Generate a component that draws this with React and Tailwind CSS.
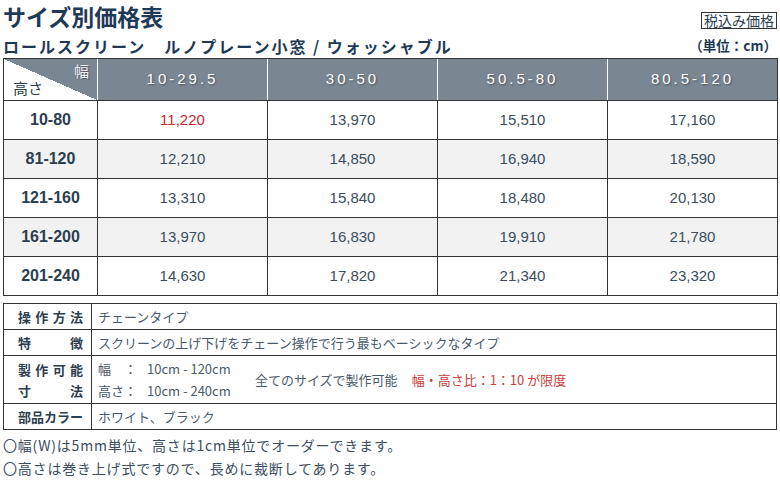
import React from 'react';

const jp = "font-['Noto_Sans_CJK_JP',sans-serif]";
const num = "font-['Liberation_Sans','Noto_Sans_CJK_JP',sans-serif]";

const widths = ['10-29.5', '30-50', '50.5-80', '80.5-120'];

const rows = [
  { h: '10-80', p: ['11,220', '13,970', '15,510', '17,160'] },
  { h: '81-120', p: ['12,210', '14,850', '16,940', '18,590'] },
  { h: '121-160', p: ['13,310', '15,840', '18,480', '20,130'] },
  { h: '161-200', p: ['13,970', '16,830', '19,910', '21,780'] },
  { h: '201-240', p: ['14,630', '17,820', '21,340', '23,320'] },
];

const Label = ({ text }) => (
  <div className="w-[65px] flex justify-between font-bold text-[13px] text-[#2c3e50]">
    {text.split('').map((c, i) => (
      <span key={i}>{c}</span>
    ))}
  </div>
);

const App = () => {
  return (
    <div className={`w-[780px] h-[480px] bg-white overflow-hidden ${jp}`}>
      <div className="pl-[3px] pr-[3px]">
        <div className="flex justify-between items-end h-[33px]">
          <h1 className="text-[23px] leading-[33px] font-bold text-[#1f3a56]">サイズ別価格表</h1>
          <div className="mb-[4px] border border-[#333] px-[2px] text-[14px] leading-[15px] text-[#2c3e50]">税込み価格</div>
        </div>
        <div className="flex justify-between items-center h-[25px]">
          <div className="text-[16px] font-bold tracking-[2px] text-[#1f3a56]">ロールスクリーン　ルノプレーン小窓 / ウォッシャブル</div>
          <div className="text-[13.5px] font-bold text-[#1f3a56]">（単位：cm）</div>
        </div>
      </div>

      <div className="ml-[3px] w-[775px] border border-[#333]">
        <div className="grid grid-cols-[93px_repeat(4,1fr)] h-[41px] bg-[#7a8793]">
          <div className="relative bg-[linear-gradient(to_top_right,#ffffff_50%,#7a8793_50%)]">
            <span className="absolute right-[8px] top-[1px] text-[15px] text-[#eef2f5] [text-shadow:1px_1px_1px_rgba(0,0,0,0.35)]">幅</span>
            <span className="absolute left-[9px] bottom-[1px] text-[15px] text-[#2c3e50]">高さ</span>
          </div>
          {widths.map((w) => (
            <div key={w} className={`border-l border-white flex items-center justify-center text-[15px] tracking-[3px] text-white [text-shadow:1px_1px_2px_rgba(0,0,0,0.4)] ${num}`}>
              {w}
            </div>
          ))}
        </div>
        {rows.map((r, i) => (
          <div key={r.h} className={`grid grid-cols-[93px_repeat(4,1fr)] h-[39px] border-t border-[#333] ${i % 2 === 1 ? 'bg-[#f2f2f2]' : 'bg-white'}`}>
            <div className={`flex items-center justify-center text-[16px] font-bold text-[#2c3e50] ${num}`}>{r.h}</div>
            {r.p.map((p, j) => (
              <div key={j} className={`border-l border-[#333] flex items-center justify-center text-[15px] ${num} ${i === 0 && j === 0 ? 'text-[#d12a2a]' : 'text-[#3b4d5e]'}`}>
                {p}
              </div>
            ))}
          </div>
        ))}
      </div>

      <div className="ml-[3px] mt-[7px] w-[774px] border border-[#333] text-[13px] text-[#4a5a6a]">
        <div className="grid grid-cols-[87px_1fr] h-[25px]">
          <div className="flex items-center pl-[14px]"><Label text="操作方法" /></div>
          <div className="border-l border-[#333] flex items-center pl-[6px]">チェーンタイプ</div>
        </div>
        <div className="grid grid-cols-[87px_1fr] h-[26px] border-t border-[#333]">
          <div className="flex items-center pl-[14px]"><Label text="特徴" /></div>
          <div className="border-l border-[#333] flex items-center pl-[6px]">スクリーンの上げ下げをチェーン操作で行う最もベーシックなタイプ</div>
        </div>
        <div className="grid grid-cols-[87px_1fr] h-[48px] border-t border-[#333]">
          <div className="flex flex-col justify-center pl-[14px] leading-[21px]">
            <Label text="製作可能" />
            <Label text="寸法" />
          </div>
          <div className="border-l border-[#333] flex items-center pl-[6px]">
            <div className="flex flex-col leading-[22px] w-[157px]">
              <div className="flex"><span className="w-[26px]">幅</span><span className="w-[13px]">：</span><span className="ml-[10px]">10cm - 120cm</span></div>
              <div className="flex"><span className="w-[26px]">高さ</span><span className="w-[13px]">：</span><span className="ml-[10px]">10cm - 240cm</span></div>
            </div>
            <span>全てのサイズで製作可能</span>
            <span className="ml-[14px] text-[#cc3b3b]">幅・高さ比：1：10 が限度</span>
          </div>
        </div>
        <div className="grid grid-cols-[87px_1fr] h-[26px] border-t border-[#333]">
          <div className="flex items-center pl-[14px]"><Label text="部品カラー" /></div>
          <div className="border-l border-[#333] flex items-center pl-[6px]">ホワイト、ブラック</div>
        </div>
      </div>

      <div className="pl-[3px] mt-[4px] text-[14px] leading-[23px] tracking-[0.8px] text-[#3b4d5e]">
        <p>〇幅(W)は5mm単位、高さは1cm単位でオーダーできます。</p>
        <p>〇高さは巻き上げ式ですので、長めに裁断してあります。</p>
      </div>
    </div>
  );
};

export default App;
